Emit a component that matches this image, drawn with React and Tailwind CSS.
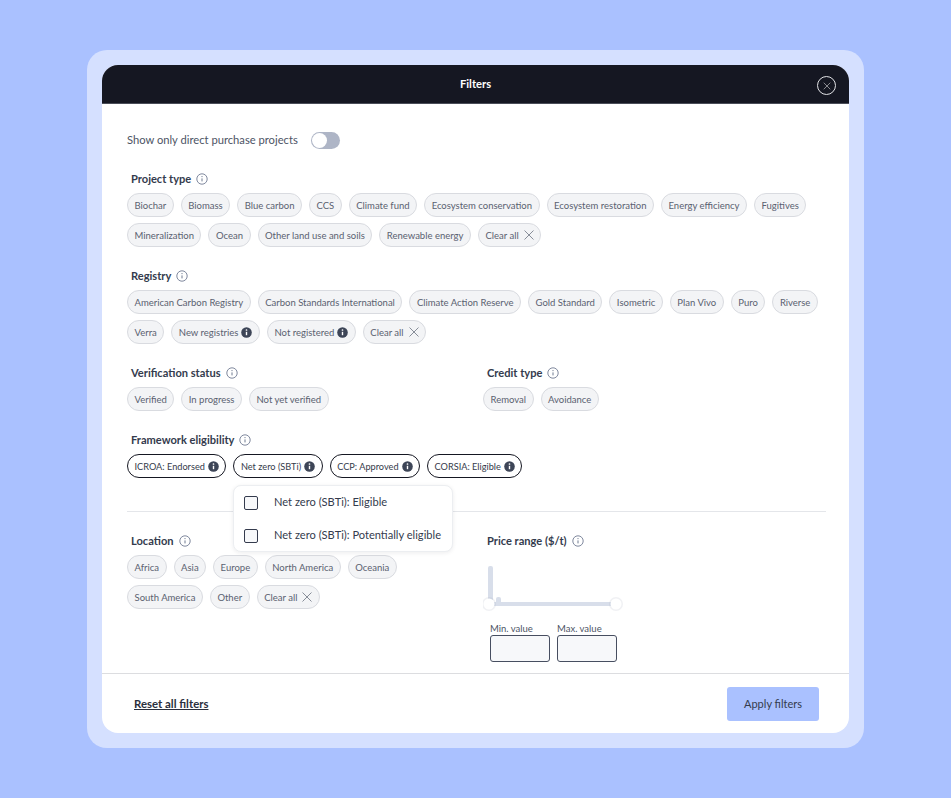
import React from 'react';
import { X } from 'lucide-react';

const InfoOutline = () => (
  <svg width="12" height="12" viewBox="0 0 12 12" fill="none" className="shrink-0">
    <circle cx="6" cy="6" r="5.2" stroke="#5f6b85" strokeWidth="0.8" />
    <path d="M6 5.4v3" stroke="#5f6b85" strokeWidth="0.9" />
    <circle cx="6" cy="3.6" r="0.55" fill="#5f6b85" />
  </svg>
);

const InfoFilled = () => (
  <svg width="11" height="11" viewBox="0 0 11 11" className="-mt-[2px] ml-[3px] shrink-0">
    <circle cx="5.5" cy="5.5" r="5.3" fill="#3d4557" />
    <path d="M5.5 4.8v3.4" stroke="#fff" strokeWidth="1.4" />
    <circle cx="5.5" cy="3" r="0.85" fill="#fff" />
  </svg>
);

const ClearIcon = () => (
  <svg width="10" height="10" viewBox="0 0 10 10" fill="none" className="-mt-[2px] ml-[5px] shrink-0">
    <path d="M0.5 0.5l9 9M9.5 0.5l-9 9" stroke="#6b7280" strokeWidth="0.8" />
  </svg>
);

const Chip = ({ children, info, clear, dark }) => (
  <span
    className={`flex h-6 items-center rounded-full border px-[6.5px] pt-[2px] whitespace-nowrap ${
      dark ? 'border-[#151722] bg-white text-[9.2px] text-[#353b4b]' : 'border-[#d9dbe0] bg-[#f3f4f6] text-[9.5px] text-[#5a6170]'
    }`}
  >
    {children}
    {info && <InfoFilled />}
    {clear && <ClearIcon />}
  </span>
);

const Title = ({ children }) => (
  <div className="flex h-4 items-center gap-[5px] pl-1 text-[11.1px] font-bold text-[#343b4d]">
    {children}
    <InfoOutline />
  </div>
);

const Chips = ({ items, className = '' }) => (
  <div className={`mt-[6px] flex flex-wrap gap-x-[7px] gap-y-[6px] ${className}`}>
    {items.map((item) => (
      <Chip key={item.label || item} {...(item.label ? item : {})}>
        {item.label || item}
      </Chip>
    ))}
  </div>
);

const projectTypes = [
  'Biochar', 'Biomass', 'Blue carbon', 'CCS', 'Climate fund', 'Ecosystem conservation', 'Ecosystem restoration',
  'Energy efficiency', 'Fugitives', 'Mineralization', 'Ocean', 'Other land use and soils', 'Renewable energy',
  { label: 'Clear all', clear: true },
];

const registries = [
  'American Carbon Registry', 'Carbon Standards International', 'Climate Action Reserve', 'Gold Standard',
  'Isometric', 'Plan Vivo', 'Puro', 'Riverse', 'Verra', { label: 'New registries', info: true },
  { label: 'Not registered', info: true }, { label: 'Clear all', clear: true },
];

const frameworks = ['ICROA: Endorsed', 'Net zero (SBTi)', 'CCP: Approved', 'CORSIA: Eligible'];

const locations = ['Africa', 'Asia', 'Europe', 'North America', 'Oceania', 'South America', 'Other', { label: 'Clear all', clear: true }];

const PriceField = ({ label }) => (
  <div className="w-[60px]">
    <div className="h-[13px] text-[9.5px] leading-[13px] text-[#4d5465]">{label}</div>
    <div className="h-[27px] rounded-[3px] border border-[#474e60] bg-[#f7f8fa]" />
  </div>
);

const App = () => {
  return (
    <div
      className="flex h-[798px] w-[951px] items-center justify-center bg-[#aac1ff]"
      style={{ fontFamily: 'Lato, sans-serif' }}
    >
      <div className="rounded-[20px] bg-[#d5e0ff] p-[15px]">
        <div className="flex h-[668px] w-[747px] flex-col overflow-hidden rounded-[16px] bg-white">
          <header className="relative flex h-[39px] shrink-0 items-center justify-center border-b border-[#4a4d58] bg-[#151722] pt-[1px] text-[11.2px] font-bold text-white">
            Filters
            <span className="absolute right-[13px] top-[11px] flex h-[19px] w-[19px] items-center justify-center rounded-full border border-[#e2e3e6]">
              <X size={12} strokeWidth={1} />
            </span>
          </header>

          <main className="min-h-0 flex-1 pl-[25px] pr-[23px] pt-[28px]">
            <div className="flex h-[17px] items-center gap-[13px] text-[11.2px] text-[#4d5465]">
              Show only direct purchase projects
              <span className="flex h-[17px] w-[29px] items-center rounded-full bg-[#aeb5c6] p-[1px]">
                <span className="h-[15px] w-[15px] rounded-full bg-white" />
              </span>
            </div>

            <div className="mt-[22px]">
              <Title>Project type</Title>
              <Chips items={projectTypes} />
            </div>

            <div className="mt-[21px]">
              <Title>Registry</Title>
              <Chips items={registries} />
            </div>

            <div className="mt-[21px] flex">
              <div className="w-[356px]">
                <Title>Verification status</Title>
                <Chips items={['Verified', 'In progress', 'Not yet verified']} />
              </div>
              <div>
                <Title>Credit type</Title>
                <Chips items={['Removal', 'Avoidance']} />
              </div>
            </div>

            <div className="relative mt-[21px]">
              <Title>Framework eligibility</Title>
              <div className="mt-[6px] flex gap-[7px]">
                {frameworks.map((label) => (
                  <Chip key={label} info dark>{label}</Chip>
                ))}
              </div>
              <div className="absolute left-[106px] top-[53px] z-10 h-[67px] w-[220px] rounded-[8px] border border-[#eceef1] bg-white shadow-[0_1px_4px_rgba(20,25,40,0.08)]">
                {['Net zero (SBTi): Eligible', 'Net zero (SBTi): Potentially eligible'].map((label) => (
                  <div key={label} className="flex h-[33px] items-center gap-[16px] pl-[10px] text-[11.1px] whitespace-nowrap text-[#343b4d]">
                    <span className="h-[14px] w-[14px] shrink-0 rounded-[2px] border border-[#343b4d] bg-[#f7f8fa]" />
                    {label}
                  </div>
                ))}
              </div>
            </div>

            <div className="mt-[33px] border-t border-[#e4e6ea]" />

            <div className="mt-[21px] flex">
              <div className="w-[356px]">
                <Title>Location</Title>
                <Chips items={locations} className="w-[290px]" />
              </div>
              <div>
                <Title>Price range ($/t)</Title>
                <svg width="140" height="50" viewBox="0 0 140 50" className="mt-[14px] block" fill="none">
                  <rect x="5" y="3" width="5" height="39" rx="2" fill="#d8deea" />
                  <rect x="13" y="34" width="5" height="9" rx="2" fill="#d8deea" />
                  <rect x="5" y="39" width="128" height="4" fill="#d8deea" />
                  <circle cx="6" cy="41" r="7" fill="#9aa3b5" opacity="0.15" />
                  <circle cx="133" cy="41" r="7" fill="#9aa3b5" opacity="0.15" />
                  <circle cx="6" cy="41" r="5.5" fill="#fff" />
                  <circle cx="133" cy="41" r="5.5" fill="#fff" />
                </svg>
                <div className="mt-[9px] flex gap-[7px] pl-[7px]">
                  <PriceField label="Min. value" />
                  <PriceField label="Max. value" />
                </div>
              </div>
            </div>
          </main>

          <footer className="flex h-[60px] shrink-0 items-center justify-between border-t border-[#dcdde0] pl-[32px] pr-[30px]">
            <a className="text-[11.4px] font-bold text-[#2a2f3d] underline">Reset all filters</a>
            <button className="h-[34px] w-[92px] rounded-[3px] bg-[#aac1ff] pt-px text-[11px] text-[#343b4d]">Apply filters</button>
          </footer>
        </div>
      </div>
    </div>
  );
};

export default App;
